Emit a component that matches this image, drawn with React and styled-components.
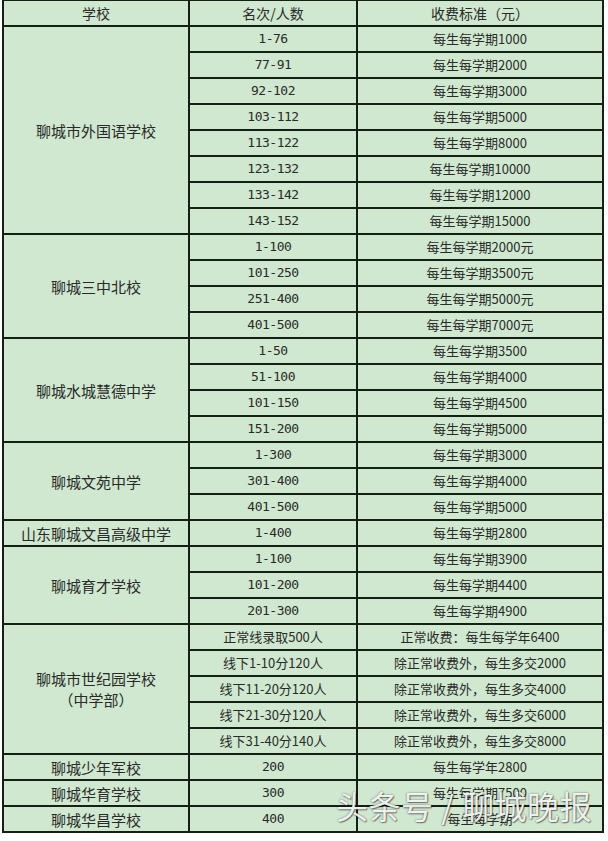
import React from 'react';
import styled, { createGlobalStyle } from 'styled-components';

const GlobalStyle = createGlobalStyle`
    html, body {
        margin: 0;
        padding: 0;
        background: #ffffff;
    }
    body {
        font-family: "Noto Sans CJK SC", "Noto Sans", sans-serif;
    }
`;

const Page = styled.div`
    position: relative;
    width: 608px;
    height: 841px;
    overflow: hidden;
    padding: 0 0 0 2px;
    box-sizing: border-box;
`;

const Table = styled.table`
    border-collapse: collapse;
    width: 600px;
    margin-top: -1px;
    background: #cfe8cf;
    color: #2a2a2a;
    table-layout: fixed;
`;

const Cell = styled.td`
    border: 2px solid #152015;
    height: 24px;
    padding: 0;
    text-align: center;
    vertical-align: middle;
    font-size: ${props => (props.$school ? '15px' : '13px')};
    line-height: 18px;
    font-family: ${props =>
        props.$mono
            ? '"DejaVu Sans Mono", "Noto Sans CJK SC", monospace'
            : '"Noto Sans CJK SC", "Noto Sans", sans-serif'};
    letter-spacing: ${props => (props.$mono ? '-0.5px' : '0')};
`;

const SchoolLine = styled.div`
    line-height: 21px;
`;

const HeadCell = styled(Cell).attrs({ as: 'th' })`
    font-weight: normal;
    font-size: 14px;
`;

const Watermark = styled.div`
    position: absolute;
    left: 336px;
    top: 783px;
    font-family: "Noto Sans CJK SC", sans-serif;
    font-size: 32px;
    line-height: 44px;
    letter-spacing: 0.5px;
    color: rgba(255, 255, 255, 0.92);
    text-shadow: 0 0 2px rgba(0, 0, 0, 0.55), 1px 1px 1px rgba(0, 0, 0, 0.4);
    white-space: nowrap;
    pointer-events: none;
`;

const groups = [
    {
        school: ['聊城市外国语学校'],
        rows: [
            ['1-76', '每生每学期1000'],
            ['77-91', '每生每学期2000'],
            ['92-102', '每生每学期3000'],
            ['103-112', '每生每学期5000'],
            ['113-122', '每生每学期8000'],
            ['123-132', '每生每学期10000'],
            ['133-142', '每生每学期12000'],
            ['143-152', '每生每学期15000'],
        ],
    },
    {
        school: ['聊城三中北校'],
        rows: [
            ['1-100', '每生每学期2000元'],
            ['101-250', '每生每学期3500元'],
            ['251-400', '每生每学期5000元'],
            ['401-500', '每生每学期7000元'],
        ],
    },
    {
        school: ['聊城水城慧德中学'],
        rows: [
            ['1-50', '每生每学期3500'],
            ['51-100', '每生每学期4000'],
            ['101-150', '每生每学期4500'],
            ['151-200', '每生每学期5000'],
        ],
    },
    {
        school: ['聊城文苑中学'],
        rows: [
            ['1-300', '每生每学期3000'],
            ['301-400', '每生每学期4000'],
            ['401-500', '每生每学期5000'],
        ],
    },
    {
        school: ['山东聊城文昌高级中学'],
        rows: [['1-400', '每生每学期2800']],
    },
    {
        school: ['聊城育才学校'],
        rows: [
            ['1-100', '每生每学期3900'],
            ['101-200', '每生每学期4400'],
            ['201-300', '每生每学期4900'],
        ],
    },
    {
        school: ['聊城市世纪园学校', '（中学部）'],
        rows: [
            ['正常线录取500人', '正常收费：每生每学年6400'],
            ['线下1-10分120人', '除正常收费外，每生多交2000'],
            ['线下11-20分120人', '除正常收费外，每生多交4000'],
            ['线下21-30分120人', '除正常收费外，每生多交6000'],
            ['线下31-40分140人', '除正常收费外，每生多交8000'],
        ],
    },
    { school: ['聊城少年军校'], rows: [['200', '每生每学年2800']] },
    { school: ['聊城华育学校'], rows: [['300', '每生每学期7500']] },
    { school: ['聊城华昌学校'], rows: [['400', '每生每学期']] },
];

const App = () => {
    return (
        <Page>
            <GlobalStyle />
            <Table>
                <colgroup>
                    <col style={{ width: '186px' }} />
                    <col style={{ width: '168px' }} />
                    <col style={{ width: '246px' }} />
                </colgroup>
                <thead>
                    <tr>
                        <HeadCell>学校</HeadCell>
                        <HeadCell>名次/人数</HeadCell>
                        <HeadCell>收费标准（元）</HeadCell>
                    </tr>
                </thead>
                <tbody>
                    {groups.map((g, gi) =>
                        g.rows.map((r, ri) => (
                            <tr key={`${gi}-${ri}`}>
                                {ri === 0 && (
                                    <Cell $school rowSpan={g.rows.length}>
                                        {g.school.map((line, li) => (
                                            <SchoolLine key={li}>{line}</SchoolLine>
                                        ))}
                                    </Cell>
                                )}
                                <Cell $mono={!/[\u4e00-\u9fff]/.test(r[0])}>{r[0]}</Cell>
                                <Cell>{r[1]}</Cell>
                            </tr>
                        ))
                    )}
                </tbody>
            </Table>
            <Watermark>头条号 / 聊城晚报</Watermark>
        </Page>
    );
};

export default App;
